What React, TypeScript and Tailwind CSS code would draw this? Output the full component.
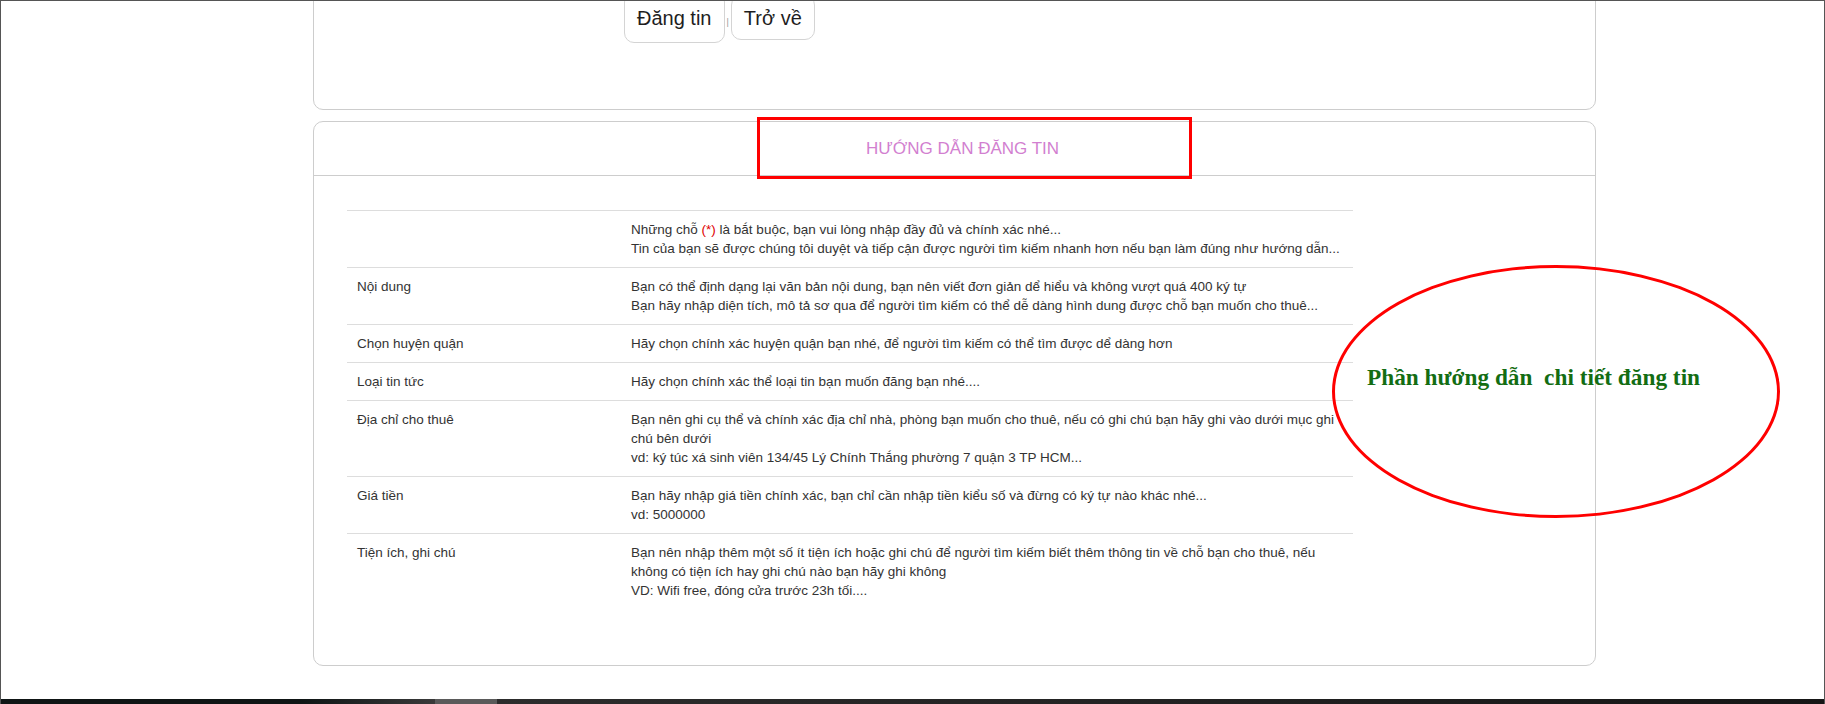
import React from 'react';

type GuideRow = {
  label: string;
  lines: React.ReactNode[];
};

const rows: GuideRow[] = [
  {
    label: '',
    lines: [
      <>
        Những chỗ <span className="text-[#e00000]">(*)</span> là bắt buộc, bạn vui lòng nhập đầy đủ và chính xác nhé...
      </>,
      'Tin của bạn sẽ được chúng tôi duyệt và tiếp cận được người tìm kiếm nhanh hơn nếu bạn làm đúng như hướng dẫn...',
    ],
  },
  {
    label: 'Nội dung',
    lines: [
      'Bạn có thể định dạng lại văn bản nội dung, bạn nên viết đơn giản dể hiểu và không vượt quá 400 ký tự',
      'Bạn hãy nhập diện tích, mô tả sơ qua để người tìm kiếm có thể dễ dàng hình dung được chỗ bạn muốn cho thuê...',
    ],
  },
  {
    label: 'Chọn huyện quận',
    lines: ['Hãy chọn chính xác huyện quận bạn nhé, để người tìm kiếm có thể tìm được dể dàng hơn'],
  },
  {
    label: 'Loại tin tức',
    lines: ['Hãy chọn chính xác thể loại tin bạn muốn đăng bạn nhé....'],
  },
  {
    label: 'Địa chỉ cho thuê',
    lines: [
      'Bạn nên ghi cụ thể và chính xác địa chỉ nhà, phòng bạn muốn cho thuê, nếu có ghi chú bạn hãy ghi vào dưới mục ghi',
      'chú bên dưới',
      'vd: ký túc xá sinh viên 134/45 Lý Chính Thắng phường 7 quận 3 TP HCM...',
    ],
  },
  {
    label: 'Giá tiền',
    lines: [
      'Bạn hãy nhập giá tiền chính xác, bạn chỉ cần nhập tiền kiểu số và đừng có ký tự nào khác nhé...',
      'vd: 5000000',
    ],
  },
  {
    label: 'Tiện ích, ghi chú',
    lines: [
      'Bạn nên nhập thêm một số ít tiện ích hoặc ghi chú để người tìm kiếm biết thêm thông tin về chỗ bạn cho thuê, nếu',
      'không có tiện ích hay ghi chú nào bạn hãy ghi không',
      'VD: Wifi free, đóng cửa trước 23h tối....',
    ],
  },
];

export default function App() {
  return (
    <div className="relative flex h-[704px] w-[1825px] flex-col overflow-hidden border-x border-t border-[#555] bg-white font-['Liberation_Sans',Arial,sans-serif] text-[#333]">
      <div className="flex-1 overflow-hidden">
        <div className="ml-[312px] w-[1283px]">
          {/* form card, scrolled mostly out of view */}
          <div className="-mt-[42px] h-[151px] rounded-[10px] border border-[#cdcdcd] pl-[310px] pt-[32px]">
            <div className="flex items-center">
              <button className="flex h-[51px] items-center rounded-[10px] border border-[#d4d4d4] bg-white px-[12px] text-[20px] text-[#1e1e1e]">
                Đăng tin
              </button>
              <span className="mx-[2px] mt-[9px] text-[9px] leading-none text-[#999]">|</span>
              <button className="flex h-[45px] items-center rounded-[10px] border border-[#d4d4d4] bg-white px-[12px] text-[20px] text-[#1e1e1e]">
                Trở về
              </button>
            </div>
          </div>

          {/* guide card */}
          <div className="mt-[11px] rounded-[10px] border border-[#cdcdcd]">
            <div className="flex h-[54px] items-center justify-center border-b border-[#cdcdcd] pl-[16px] text-[17px] text-[#d27fd0]">
              HƯỚNG DẪN ĐĂNG TIN
            </div>
            <div className="pb-[56px] pl-[33px] pt-[34px]">
              <table className="w-[1006px] table-fixed border-collapse text-[13.5px] leading-[19px]">
                <colgroup>
                  <col className="w-[274px]" />
                  <col />
                </colgroup>
                <tbody>
                  {rows.map((row, i) => (
                    <tr key={i} className="border-t border-[#dddddd]">
                      <td className="px-[10px] py-[9px] align-top">{row.label}</td>
                      <td className="whitespace-nowrap px-[10px] py-[9px] align-top">
                        {row.lines.map((line, j) => (
                          <div key={j}>{line}</div>
                        ))}
                      </td>
                    </tr>
                  ))}
                </tbody>
              </table>
            </div>
          </div>
        </div>
      </div>

      <div className="flex h-[5px] bg-[#1b1f1f]">
        <div className="w-[300px] bg-[#0f1515]" />
        <div className="w-[134px] bg-linear-to-r from-[#0f1515] to-[#3a3a3a]" />
        <div className="w-[62px] bg-[#5a5a5a]" />
        <div className="flex-1 bg-linear-to-r from-[#2c2c2c] via-[#222] to-[#161616]" />
      </div>

      {/* annotation marks drawn over the page */}
      <div className="pointer-events-none absolute left-[756px] top-[116px] h-[62px] w-[435px] border-[3px] border-[#ff0000]" />
      <div className="pointer-events-none absolute left-[1331px] top-[264px] h-[253px] w-[448px] rounded-[50%] border-[3px] border-[#ff0000] pl-[32px] pt-[98px]">
        <div className="whitespace-pre font-['Liberation_Serif','Times_New_Roman',serif] text-[23.3px] font-bold leading-none text-[#136d13]">
          {'Phần hướng dẫn  chi tiết đăng tin'}
        </div>
      </div>
    </div>
  );
}
